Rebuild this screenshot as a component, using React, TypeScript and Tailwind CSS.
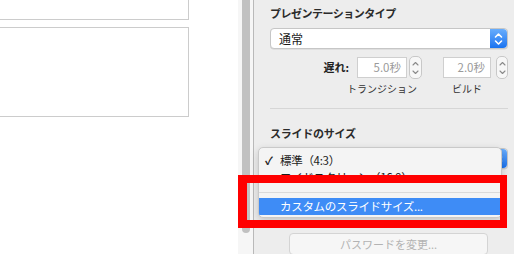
import React from "react";

function BlueStepper() {
  return (
    <div className="flex h-full w-[17px] items-center justify-center rounded-r-[4px] bg-gradient-to-b from-[#68adfc] to-[#1672f0]">
      <svg width="9" height="14" viewBox="0 0 9 14" fill="none">
        <path d="M1.5 5 L4.5 2 L7.5 5" stroke="white" strokeWidth="1.6" strokeLinecap="round" strokeLinejoin="round" />
        <path d="M1.5 9 L4.5 12 L7.5 9" stroke="white" strokeWidth="1.6" strokeLinecap="round" strokeLinejoin="round" />
      </svg>
    </div>
  );
}

function Select({ label }: { label: string }) {
  return (
    <div className="flex h-[21px] w-[238px] items-stretch rounded-[4px] border border-[#c6c6c6] bg-white shadow-[0_0.5px_0.5px_rgba(0,0,0,0.12)]">
      <div className="flex flex-1 items-center pl-[8px] text-[12px] text-[#1a1a1a]">{label}</div>
      <BlueStepper />
    </div>
  );
}

function SmallStepper({ w }: { w: string }) {
  return (
    <div className={`flex h-[23px] ${w} items-center justify-center rounded-[5px] border border-[#c8c8c8] bg-[#f7f7f7]`}>
      <svg width="7" height="16" viewBox="0 0 7 16" fill="none">
        <path d="M1 5 L3.5 2.5 L6 5" stroke="#8a8a8a" strokeWidth="1.1" strokeLinecap="round" strokeLinejoin="round" />
        <path d="M1 11 L3.5 13.5 L6 11" stroke="#8a8a8a" strokeWidth="1.1" strokeLinecap="round" strokeLinejoin="round" />
      </svg>
    </div>
  );
}

export default function App() {
  return (
    <div className="relative flex h-[254px] w-[514px] overflow-hidden bg-white font-['Noto_Sans_CJK_JP','Noto_Sans',sans-serif]">
      {/* document area */}
      <div className="flex w-[238px] flex-col">
        <div className="ml-[-2px] mt-[-10px] h-[30px] w-[191px] border border-[#cccccc]" />
        <div className="ml-[-2px] mt-[7px] h-[90px] w-[191px] border border-[#cccccc]" />
      </div>
      {/* scrollbar */}
      <div className="w-[15px] bg-[#f6f6f6]">
        <div className="ml-[4px] mt-[-10px] h-[243px] w-[8px] rounded-full bg-[#c1c1c1]" />
      </div>
      <div className="w-px bg-[#b9b9b9]" />
      {/* inspector panel */}
      <div className="relative flex-1 bg-[#ededed] pl-[16px]">
        <div className="mt-[6px] text-[11px] font-bold leading-[14px] tracking-[-0.5px] text-[#2b2b2b]">
          プレゼンテーションタイプ
        </div>
        <div className="mt-[8px]">
          <Select label="通常" />
        </div>
        <div className="mt-[8px] flex h-[21px] items-center">
          <div className="w-[79px] text-right text-[11px] font-bold text-[#1f1f1f]">遅れ:</div>
          <div className="ml-[8px] flex h-[21px] w-[50px] items-center justify-end border border-[#cfcfcf] bg-white pr-[5px] text-[11.5px] text-[#9a9a9a]">
            5.0秒
          </div>
          <div className="ml-[2px]">
            <SmallStepper w="w-[13px]" />
          </div>
          <div className="ml-[21px] flex h-[21px] w-[48px] items-center justify-end border border-[#cfcfcf] bg-white pr-[5px] text-[11.5px] text-[#9a9a9a]">
            2.0秒
          </div>
          <div className="ml-[5px]">
            <SmallStepper w="w-[12px]" />
          </div>
        </div>
        <div className="mt-[4px] flex h-[14px] items-center text-[10px] leading-[14px] text-[#333]">
          <div className="ml-[87px] flex w-[50px] justify-center whitespace-nowrap">トランジション</div>
          <div className="ml-[36px] flex w-[48px] justify-center whitespace-nowrap">ビルド</div>
        </div>
        <div className="mt-[12px] h-px w-[238px] bg-[#d6d6d6]" />
        <div className="mt-[17px] text-[11px] font-bold leading-[14px] tracking-[-0.25px] text-[#2b2b2b]">
          スライドのサイズ
        </div>
        <div className="mt-[8px]">
          <Select label="" />
        </div>
        <div className="ml-[19px] mt-[64px] flex h-[22px] w-[199px] items-center justify-center rounded-[4px] border border-[#d4d4d4] bg-[#f6f6f6] text-[11px] text-[#b3b3b3]">
          パスワードを変更...
        </div>

        {/* popup menu */}
        <div className="absolute left-[4px] top-[147px] h-[71px] w-[244px] overflow-hidden rounded-[5px] border border-[#c9c9c9] bg-[#f4f4f4] pt-[4px] shadow-[0_3px_8px_rgba(0,0,0,0.18)]">
          <div className="relative flex h-[17px] items-center pl-[21px] text-[11.5px] tracking-[-0.3px] text-[#1c1c1c]">
            <span className="absolute left-[6px] text-[11px] font-bold">✓</span>
            標準（4:3）
          </div>
          <div className="flex h-[17px] items-center pl-[21px] text-[11.5px] tracking-[-0.3px] text-[#1c1c1c]">
            ワイドスクリーン（16:9）
          </div>
          <div className="flex h-[12px] items-center">
            <div className="h-px w-full bg-[#dadada]" />
          </div>
          <div className="flex h-[17px] items-center bg-[#3e8cf6] pl-[21px] text-[11.5px] tracking-[-0.3px] text-white">
            カスタムのスライドサイズ...
          </div>
          <div className="flex h-[17px] items-center pl-[21px] text-[11.5px] tracking-[-0.3px] text-[#1c1c1c]">
            ページ設定に合わせる
          </div>
        </div>
      </div>

      {/* red annotation box */}
      <div className="absolute left-[238px] top-[175px] h-[53px] w-[269px] border-y-[8px] border-l-[9px] border-r-[7px] border-[#ff0000]" />
    </div>
  );
}
